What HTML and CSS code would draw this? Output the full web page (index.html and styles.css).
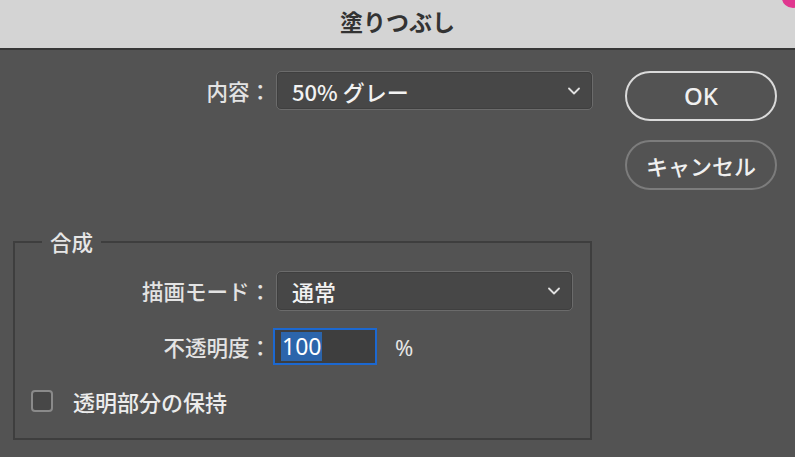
FILE: index.html
```html
<!DOCTYPE html>
<html lang="ja">
<head>
<meta charset="utf-8">
<title>塗りつぶし</title>
<link rel="stylesheet" href="styles.css">
</head>
<body>
<div class="window">
  <div class="titlebar">
    <span class="title">塗りつぶし</span>
    <span class="corner"></span>
  </div>
  <div class="main">
    <div class="form">
      <div class="row row-content">
        <span class="lbl lbl-top">内容：</span>
        <div class="select sel-content">
          <span class="sel-text">50% グレー</span>
          <svg class="chev" width="12" height="8" viewBox="0 0 12 8"><polyline points="1,1.5 6,6.5 11,1.5" fill="none" stroke="#e0e0e0" stroke-width="1.8" stroke-linecap="round" stroke-linejoin="round"/></svg>
        </div>
      </div>
      <fieldset class="group">
        <legend class="legend">合成</legend>
        <div class="row row-mode">
          <span class="lbl lbl-group">描画モード：</span>
          <div class="select sel-mode">
            <span class="sel-text">通常</span>
            <svg class="chev" width="12" height="8" viewBox="0 0 12 8"><polyline points="1,1.5 6,6.5 11,1.5" fill="none" stroke="#e0e0e0" stroke-width="1.8" stroke-linecap="round" stroke-linejoin="round"/></svg>
          </div>
        </div>
        <div class="row row-opacity">
          <span class="lbl lbl-group">不透明度：</span>
          <div class="num"><span class="num-sel">100</span></div>
          <span class="pct">%</span>
        </div>
        <div class="row row-check">
          <span class="checkbox"></span>
          <span class="check-label">透明部分の保持</span>
        </div>
      </fieldset>
    </div>
    <div class="buttons">
      <button class="btn btn-ok">OK</button>
      <button class="btn btn-cancel">キャンセル</button>
    </div>
  </div>
</div>
</body>
</html>
```
FILE: styles.css
```css
html, body {
  margin: 0;
  padding: 0;
}
body {
  width: 795px;
  height: 457px;
  overflow: hidden;
  background: #535353;
  font-family: "Noto Sans CJK JP", "Noto Sans", sans-serif;
  color: #e6e6e6;
}
.window {
  width: 795px;
  height: 457px;
}
.titlebar {
  position: relative;
  height: 50px;
  box-sizing: border-box;
  padding-bottom: 6px;
  background: #d4d4d4;
  border-bottom: 2px solid #373737;
  display: flex;
  align-items: center;
  justify-content: center;
  overflow: hidden;
}
.title {
  font-size: 23px;
  font-weight: 700;
  color: #333333;
  line-height: 1;
}
.corner {
  position: absolute;
  right: -9px;
  top: -12px;
  width: 22px;
  height: 20px;
  border-radius: 50%;
  background: #e0378f;
}
.main {
  display: flex;
  padding-top: 21px;
}
.form {
  width: 593px;
}
.row {
  display: flex;
  align-items: center;
}
.lbl {
  font-size: 21.5px;
  font-weight: 500;
  line-height: 30px;
  text-align: right;
  color: #e3e3e3;
  white-space: nowrap;
}
.lbl-top {
  width: 271px;
}
.lbl-group {
  width: 256px;
}
.select {
  box-sizing: border-box;
  display: flex;
  align-items: center;
  justify-content: space-between;
  background: #474747;
  border: 1px solid #6b6b6b;
  box-shadow: inset 0 0 0 1px #3f3f3f;
  border-radius: 5px;
  padding: 0 12px 0 15px;
}
.sel-text {
  font-size: 22px;
  font-weight: 500;
  color: #f2f2f2;
  line-height: 1;
}
.chev {
  display: block;
}
.sel-content {
  margin-left: 5px;
  width: 317px;
  height: 39px;
}
.group {
  box-sizing: border-box;
  margin: 120px 0 0 13px;
  width: 579px;
  padding: 0 0 25px 0;
  border: 2px solid #3e3e3e;
  min-width: 0;
}
.legend {
  margin-left: 27px;
  padding: 0 8px;
  font-size: 21.5px;
  font-weight: 500;
  line-height: 24px;
  color: #e6e6e6;
}
.row-mode {
  margin-top: 17px;
}
.sel-mode {
  margin-left: 5px;
  width: 297px;
  height: 40px;
}
.row-opacity {
  margin-top: 17px;
}
.num {
  box-sizing: border-box;
  margin-left: 2px;
  width: 104px;
  height: 37px;
  border: 2px solid #1c68d0;
  background: #3e3e3e;
  display: flex;
  align-items: center;
  padding-left: 6px;
}
.num-sel {
  background: #2c65ab;
  color: #ffffff;
  font-family: "Noto Sans", "Noto Sans CJK JP", sans-serif;
  font-size: 23px;
  line-height: 29px;
  height: 29px;
  padding: 0 1px;
}
.pct {
  margin-left: 18px;
  font-family: "Noto Sans", sans-serif;
  font-size: 22px;
  color: #e6e6e6;
}
.row-check {
  margin-top: 24px;
  height: 24px;
}
.checkbox {
  box-sizing: border-box;
  margin-left: 16px;
  width: 22px;
  height: 22px;
  border: 2px solid #8a8a8a;
  border-radius: 4px;
  background: #474747;
}
.check-label {
  margin-left: 20px;
  font-size: 22px;
  font-weight: 500;
  line-height: 24px;
  color: #ececec;
}
.buttons {
  margin-left: 32px;
  width: 152px;
  display: flex;
  flex-direction: column;
}
.btn {
  box-sizing: border-box;
  width: 152px;
  height: 50px;
  border-radius: 25px;
  background: transparent;
  font-family: "Noto Sans CJK JP", "Noto Sans", sans-serif;
  font-size: 22px;
  font-weight: 500;
  color: #f0f0f0;
  padding: 0;
  line-height: 1;
}
.btn-ok {
  border: 2px solid #dadada;
  font-family: "Noto Sans", sans-serif;
  font-size: 24px;
}
.btn-cancel {
  margin-top: 19px;
  border: 2px solid #7c7c7c;
}
```
